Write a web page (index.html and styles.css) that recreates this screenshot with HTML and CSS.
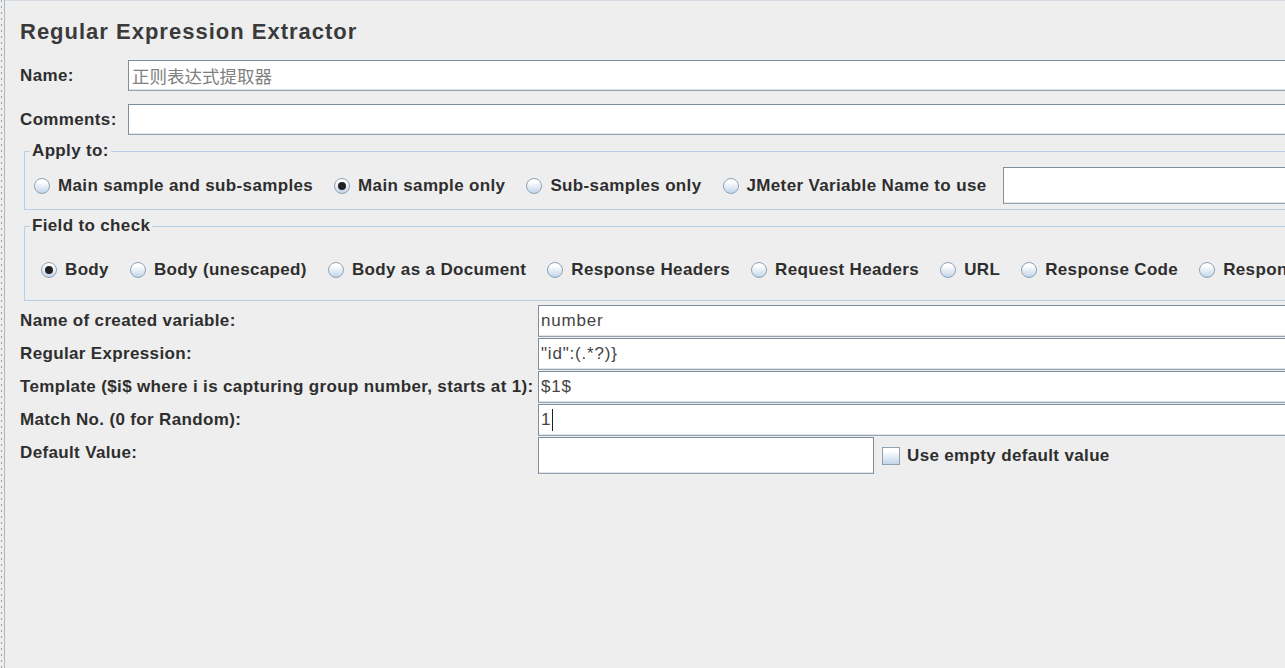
FILE: index.html
```html
<!DOCTYPE html>
<html>
<head>
    <meta charset="utf-8">
    <link rel="stylesheet" href="styles.css">
</head>
<body>
    <div class="window">
        <div class="gutter"></div>
        <div class="panel">
            <h1 class="title">Regular Expression Extractor</h1>

            <div class="row row-name">
                <span class="lbl">Name:</span>
                <div class="field"><span class="cjk">正则表达式提取器</span></div>
            </div>
            <div class="row row-comments">
                <span class="lbl">Comments:</span>
                <div class="field"></div>
            </div>

            <fieldset class="group group-apply">
                <legend>Apply to:</legend>
                <div class="radios">
                    <span class="opt"><span class="radio"></span>Main sample and sub-samples</span>
                    <span class="opt"><span class="radio on"></span>Main sample only</span>
                    <span class="opt"><span class="radio"></span>Sub-samples only</span>
                    <span class="opt"><span class="radio"></span>JMeter Variable Name to use</span>
                    <div class="field field-var"></div>
                </div>
            </fieldset>

            <fieldset class="group group-check">
                <legend>Field to check</legend>
                <div class="radios radios-check">
                    <span class="opt"><span class="radio on"></span>Body</span>
                    <span class="opt"><span class="radio"></span>Body (unescaped)</span>
                    <span class="opt"><span class="radio"></span>Body as a Document</span>
                    <span class="opt"><span class="radio"></span>Response Headers</span>
                    <span class="opt"><span class="radio"></span>Request Headers</span>
                    <span class="opt"><span class="radio"></span>URL</span>
                    <span class="opt"><span class="radio"></span>Response Code</span>
                    <span class="opt"><span class="radio"></span>Response Message</span>
                </div>
            </fieldset>

            <div class="form">
                <span class="lbl">Name of created variable:</span>
                <div class="field">number</div>

                <span class="lbl">Regular Expression:</span>
                <div class="field">"id":(.*?)}</div>

                <span class="lbl">Template ($i$ where i is capturing group number, starts at 1):</span>
                <div class="field">$1$</div>

                <span class="lbl">Match No. (0 for Random):</span>
                <div class="field">1<span class="caret"></span></div>

                <span class="lbl">Default Value:</span>
                <div class="default-row">
                    <div class="field field-default"></div>
                    <span class="opt opt-check"><span class="check"></span>Use empty default value</span>
                </div>
            </div>
        </div>
    </div>
</body>
</html>
```

FILE: styles.css
```css
* {margin: 0; padding: 0; box-sizing: border-box;}
body {
    width: 1285px;
    height: 668px;
    overflow: hidden;
    background: #eeeeee;
    font-family: "Liberation Sans", Arial, sans-serif;
    color: #333333;
}

.window {
    display: flex;
    height: 668px;
}

.gutter {
    flex: none;
    width: 5px;
    height: 100%;
    background: repeating-linear-gradient(#9aa4ae 0 2px, #eeeeee 2px 6px) 1px 0 / 1px 100% no-repeat;
    border-right: 1px solid #a9b7c5;
}

.panel {
    flex: none;
    width: 1500px;
    border-top: 1px solid #d4dbe2;
    padding-left: 15px;
}

.title {
    font-weight: bold;
    font-size: 22px;
    letter-spacing: 1px;
    line-height: 28px;
    margin-top: 17px;
    color: #3a3a3a;
}

.lbl, .opt, legend {
    font-weight: bold;
    font-size: 17px;
    letter-spacing: 0.35px;
    white-space: nowrap;
    color: #2e2e2e;
}

.row {
    display: flex;
    align-items: center;
    height: 31px;
}

.row .lbl { width: 108px; flex: none; }
.row-name { margin-top: 14px; }
.row-comments { margin-top: 13px; }

.field {
    flex: 1;
    height: 100%;
    display: flex;
    align-items: center;
    background: #fff;
    border: 1px solid #7f8e9d;
    border-bottom-color: #95a3b0;
    box-shadow: inset 0 -1px 0 #dfe5ea;
    padding-left: 3px;
    font-size: 17px;
    letter-spacing: 0.8px;
    color: #444;
    white-space: nowrap;
}

.cjk {
    font-family: "Noto Sans CJK SC", sans-serif;
    font-size: 17.5px;
    letter-spacing: 0;
    color: #808080;
}

.group {
    border: 1px solid #b8cfe5;
    margin-left: 4px;
    padding: 6px 0 5px 9px;
}

.group legend {
    line-height: 20px;
    padding: 0 2px;
    margin-left: -4px;
}

.group-apply { margin-top: 6px; }
.group-check {
    margin-top: 6px;
    padding-top: 24px;
    padding-bottom: 20px;
}

.radios {
    display: flex;
    align-items: center;
    gap: 21px;
    height: 37px;
}

.radios-check {
    height: 20px;
    padding-left: 7px;
}

.opt {
    display: flex;
    align-items: center;
    gap: 8px;
}

.radio {
    flex: none;
    position: relative;
    width: 16px;
    height: 16px;
    border-radius: 50%;
    border: 1px solid #8fa2b5;
    background: linear-gradient(#ffffff 20%, #c2d5e9);
}

.radio.on::after {
    content: '';
    position: absolute;
    left: 3px;
    top: 3px;
    width: 8px;
    height: 8px;
    border-radius: 50%;
    background: #222;
}

.field-var {
    flex: none;
    width: 300px;
    margin-left: -5px;
}

.form {
    display: grid;
    grid-template-columns: 518px 1fr;
    grid-auto-rows: 32px;
    row-gap: 1px;
    align-items: center;
    margin-top: 4px;
}

.form .field { padding-left: 2px; }

.caret {
    display: inline-block;
    width: 1px;
    height: 22px;
    margin-left: 1px;
    background: #222;
}

.default-row {
    display: flex;
    align-items: center;
    height: 37px;
    margin-top: 5px;
}

.field-default {
    flex: none;
    width: 336px;
}

.opt-check {
    margin-left: 8px;
    gap: 7px;
}

.check {
    flex: none;
    width: 18px;
    height: 18px;
    border: 1px solid #8fa2b5;
    background: linear-gradient(#ffffff 20%, #c2d5e9);
}
```
